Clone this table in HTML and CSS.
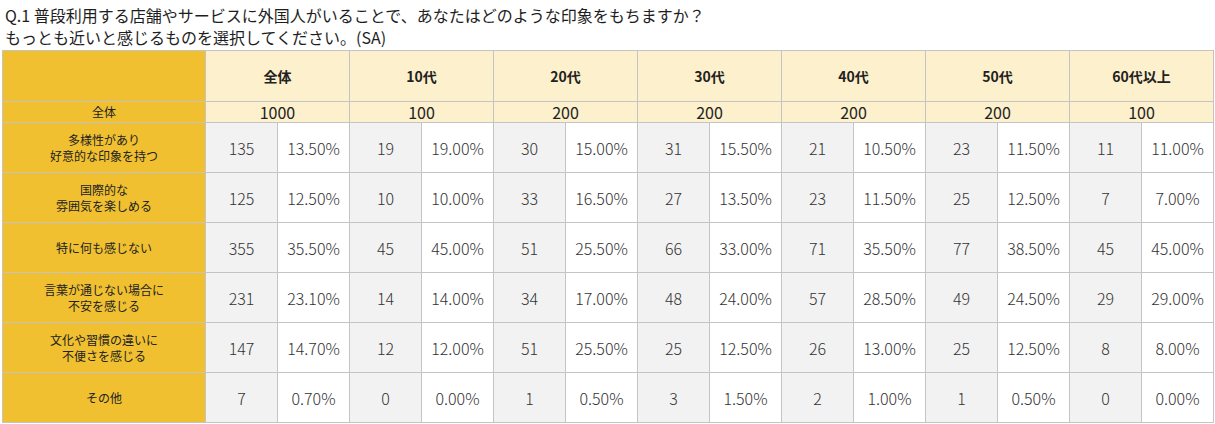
FILE: index.html
```html
<!DOCTYPE html>
<html lang="ja">
<head>
<meta charset="utf-8">
<link rel="stylesheet" href="styles.css">
</head>
<body>
<div class="title">Q.1 普段利用する店舗やサービスに外国人がいることで、あなたはどのような印象をもちますか？<br>もっとも近いと感じるものを選択してください。(SA)</div>
<table class="grid">
  <colgroup>
    <col class="c-label">
    <col class="c-num"><col class="c-num"><col class="c-num"><col class="c-num"><col class="c-num"><col class="c-num"><col class="c-num">
    <col class="c-num"><col class="c-num"><col class="c-num"><col class="c-num"><col class="c-num"><col class="c-num"><col class="c-num">
  </colgroup>
  <tr class="r-head">
    <th class="lab"></th>
    <th colspan="2">全体</th><th colspan="2">10代</th><th colspan="2">20代</th><th colspan="2">30代</th><th colspan="2">40代</th><th colspan="2">50代</th><th colspan="2">60代以上</th>
  </tr>
  <tr class="r-total">
    <th class="lab">全体</th>
    <td colspan="2">1000</td><td colspan="2">100</td><td colspan="2">200</td><td colspan="2">200</td><td colspan="2">200</td><td colspan="2">200</td><td colspan="2">100</td>
  </tr>
  <tr class="r-data">
    <th class="lab">多様性があり<br>好意的な印象を持つ</th>
    <td class="n">135</td><td class="p">13.50%</td><td class="n">19</td><td class="p">19.00%</td><td class="n">30</td><td class="p">15.00%</td><td class="n">31</td><td class="p">15.50%</td><td class="n">21</td><td class="p">10.50%</td><td class="n">23</td><td class="p">11.50%</td><td class="n">11</td><td class="p">11.00%</td>
  </tr>
  <tr class="r-data">
    <th class="lab">国際的な<br>雰囲気を楽しめる</th>
    <td class="n">125</td><td class="p">12.50%</td><td class="n">10</td><td class="p">10.00%</td><td class="n">33</td><td class="p">16.50%</td><td class="n">27</td><td class="p">13.50%</td><td class="n">23</td><td class="p">11.50%</td><td class="n">25</td><td class="p">12.50%</td><td class="n">7</td><td class="p">7.00%</td>
  </tr>
  <tr class="r-data">
    <th class="lab">特に何も感じない</th>
    <td class="n">355</td><td class="p">35.50%</td><td class="n">45</td><td class="p">45.00%</td><td class="n">51</td><td class="p">25.50%</td><td class="n">66</td><td class="p">33.00%</td><td class="n">71</td><td class="p">35.50%</td><td class="n">77</td><td class="p">38.50%</td><td class="n">45</td><td class="p">45.00%</td>
  </tr>
  <tr class="r-data">
    <th class="lab">言葉が通じない場合に<br>不安を感じる</th>
    <td class="n">231</td><td class="p">23.10%</td><td class="n">14</td><td class="p">14.00%</td><td class="n">34</td><td class="p">17.00%</td><td class="n">48</td><td class="p">24.00%</td><td class="n">57</td><td class="p">28.50%</td><td class="n">49</td><td class="p">24.50%</td><td class="n">29</td><td class="p">29.00%</td>
  </tr>
  <tr class="r-data">
    <th class="lab">文化や習慣の違いに<br>不便さを感じる</th>
    <td class="n">147</td><td class="p">14.70%</td><td class="n">12</td><td class="p">12.00%</td><td class="n">51</td><td class="p">25.50%</td><td class="n">25</td><td class="p">12.50%</td><td class="n">26</td><td class="p">13.00%</td><td class="n">25</td><td class="p">12.50%</td><td class="n">8</td><td class="p">8.00%</td>
  </tr>
  <tr class="r-data">
    <th class="lab">その他</th>
    <td class="n">7</td><td class="p">0.70%</td><td class="n">0</td><td class="p">0.00%</td><td class="n">1</td><td class="p">0.50%</td><td class="n">3</td><td class="p">1.50%</td><td class="n">2</td><td class="p">1.00%</td><td class="n">1</td><td class="p">0.50%</td><td class="n">0</td><td class="p">0.00%</td>
  </tr>
</table>
</body>
</html>
```
FILE: styles.css
```css
html, body {
  margin: 0;
  padding: 0;
  background: #fff;
}
body {
  font-family: "Noto Sans CJK JP", "Noto Sans", sans-serif;
  color: #222;
  padding: 0 2px;
}
.title {
  font-size: 16px;
  line-height: 22px;
  padding: 4px 0 0 3px;
  height: 50px;
  box-sizing: border-box;
  color: #1e1e1e;
}
.grid {
  border-collapse: collapse;
  table-layout: fixed;
  width: 1211px;
}
.c-label { width: 203px; }
.c-num { width: 72px; }
.grid th, .grid td {
  border: 1px solid #c4c4c4;
  padding: 0;
  text-align: center;
  vertical-align: middle;
}
.grid th.lab {
  background: #f0c030;
  font-weight: normal;
  font-size: 12px;
  line-height: 16px;
  color: #222;
}
.r-head th {
  height: 50px;
  background: #fdf0cc;
  font-size: 14px;
  font-weight: bold;
  color: #222;
}
.r-total td {
  height: 20px;
  background: #fdf0cc;
  font-size: 16px;
  line-height: 18px;
  color: #222;
}
.r-data th, .r-data td {
  height: 49px;
}
.r-data td {
  font-size: 16px;
  font-weight: 300;
  color: #333;
}
.r-data td.n { background: #f2f2f2; }
.r-data td.p { background: #fff; }
```
